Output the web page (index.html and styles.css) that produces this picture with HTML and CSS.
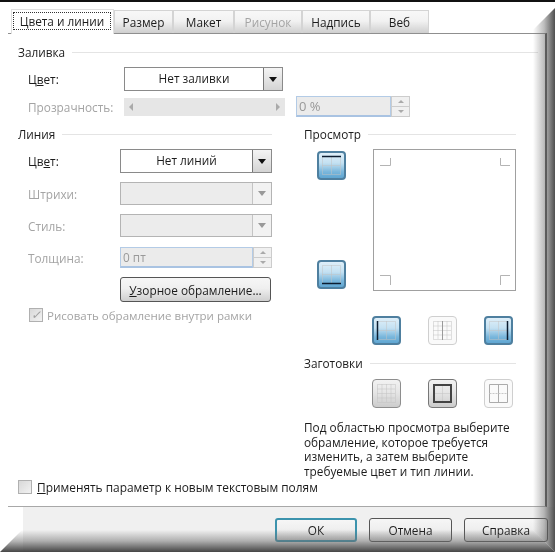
FILE: index.html
```html
<!DOCTYPE html>
<html lang="ru">
<head>
  <meta charset="UTF-8" />
  <title>Формат надписи</title>
  <link rel="stylesheet" href="styles.css">
</head>
<body>
  <svg class="defs" width="0" height="0">
    <symbol id="grid" viewBox="0 0 21 21">
      <path class="dots" d="M1.5 1.5H19.5V19.5H1.5ZM10.5 1.5V19.5M1.5 10.5H19.5"/>
    </symbol>
    <symbol id="grid-dense" viewBox="0 0 21 21">
      <path class="dots" d="M1.5 1.5H19.5V19.5H1.5ZM10.5 1.5V19.5M1.5 10.5H19.5M6 1.5V19.5M15 1.5V19.5M1.5 6H19.5M1.5 15H19.5"/>
    </symbol>
  </svg>

  <div class="dialog">
    <div class="tabs">
      <div class="tab active"><span class="focus">Цвета и линии</span></div>
      <div class="tab w-size">Размер</div>
      <div class="tab w-layout">Макет</div>
      <div class="tab w-pic off">Рисунок</div>
      <div class="tab w-cap">Надпись</div>
      <div class="tab w-web">Веб</div>
    </div>

    <div class="panel">
      <div class="title">Заливка</div>
      <div class="row fill-color">
        <label class="lbl lbl-fill">Ц<u>в</u>ет:</label>
        <div class="combo combo-fill"><span>Нет заливки</span><i class="drop"></i></div>
      </div>
      <div class="row fill-alpha">
        <label class="lbl lbl-fill off">Прозрачность:</label>
        <div class="scroll"><i class="sc-left"></i><i class="sc-right"></i></div>
        <div class="num num-alpha">0 %</div>
        <div class="spin"><i class="up"></i><i class="down"></i></div>
      </div>

      <div class="cols">
        <div class="col-left">
          <div class="title">Линия</div>
          <div class="row line-color">
            <label class="lbl">Цв<u>е</u>т:</label>
            <div class="combo"><span>Нет линий</span><i class="drop"></i></div>
          </div>
          <div class="row line-next">
            <label class="lbl off">Штрихи:</label>
            <div class="combo disabled"><span></span><i class="drop"></i></div>
          </div>
          <div class="row line-next">
            <label class="lbl off">Стиль:</label>
            <div class="combo disabled"><span></span><i class="drop"></i></div>
          </div>
          <div class="row line-width">
            <label class="lbl off">Толщина:</label>
            <div class="num num-width">0 пт</div>
            <div class="spin"><i class="up"></i><i class="down"></i></div>
          </div>
          <button class="btn btn-pattern"><u>У</u>зорное обрамление...</button>
          <div class="check check-inner off"><i class="box checked"></i>Рисовать обрамление внутри рамки</div>
        </div>

        <div class="col-right">
          <div class="title">Просмотр</div>
          <div class="preview">
            <div class="side">
              <div class="bd on"><svg viewBox="0 0 21 21"><use href="#grid"/><path class="edge" d="M1 1.5H20"/></svg></div>
              <div class="bd on"><svg viewBox="0 0 21 21"><use href="#grid"/><path class="edge" d="M1 19.5H20"/></svg></div>
            </div>
            <div class="sheet">
              <svg viewBox="0 0 141 140"><path class="marks" d="M6 15.5H16.5V8M126.5 8V15.5H136M6 125.5H16.5V135M136 125.5H126.5V135"/></svg>
            </div>
          </div>
          <div class="bd-row">
            <div class="bd on"><svg viewBox="0 0 21 21"><use href="#grid"/><path class="edge" d="M1.5 1V20"/></svg></div>
            <div class="bd"><svg viewBox="0 0 21 21"><use href="#grid-dense"/><path class="mid" d="M10.5 1V20"/></svg></div>
            <div class="bd on"><svg viewBox="0 0 21 21"><use href="#grid"/><path class="edge" d="M19.5 1V20"/></svg></div>
          </div>

          <div class="title presets-title">Заготовки</div>
          <div class="bd-row presets">
            <div class="bd grey"><svg viewBox="0 0 21 21"><use href="#grid-dense"/></svg></div>
            <div class="bd grey dark"><svg viewBox="0 0 21 21"><use href="#grid"/><path class="frame" d="M2 2H19V19H2Z"/></svg></div>
            <div class="bd"><svg viewBox="0 0 21 21"><path class="plain" d="M1.5 1.5H19.5V19.5H1.5ZM10.5 1.5V19.5"/><path class="plain-h" d="M1.5 10.5H19.5"/></svg></div>
          </div>
          <p class="hint">Под областью просмотра выберите обрамление, которое требуется изменить, а затем выберите требуемые цвет и тип линии.</p>
        </div>
      </div>

      <div class="check check-new"><i class="box"></i><span><u>П</u>рименять параметр к новым текстовым полям</span></div>
    </div>

    <div class="footer">
      <button class="btn btn-ok">ОК</button>
      <button class="btn btn-cancel">Отмена</button>
      <button class="btn btn-help">Справка</button>
    </div>

    <div class="shade-right"></div>
    <div class="shade-bottom"></div>
  </div>
</body>
</html>
```

FILE: styles.css
```css
html, body {
  margin: 0;
  padding: 0;
  background: #fff;
}
.defs {
  position: absolute;
}
.dialog {
  position: relative;
  width: 555px;
  height: 552px;
  overflow: hidden;
  background: #fff;
  border-top: 2px solid #111;
  box-sizing: border-box;
  font-family: "Open Sans", "Noto Sans", sans-serif;
  font-size: 11.8px;
  color: #1c1c1c;
  filter: blur(0.45px);
}
u {
  text-underline-offset: 1px;
}
.off {
  color: #a4a4a4;
}

/* tabs */
.tabs {
  display: flex;
  height: 23px;
  margin: 8px 0 0 11px;
}
.tab {
  width: 60px;
  box-sizing: border-box;
  border: 1px solid #d4d4d4;
  border-bottom: none;
  background: linear-gradient(#f8f8f8, #f2f2f2 45%, #cfcfcf);
  text-align: center;
  line-height: 22px;
}
.tab.active {
  width: 103px;
  height: 25px;
  margin-top: -1px;
  padding: 2px 2px 0 1px;
  background: #fff;
  position: relative;
  z-index: 1;
  border-color: #e0e0e0;
}
.focus {
  display: block;
  height: 18px;
  line-height: 16px;
  border: 1px dotted #333;
  box-sizing: border-box;
}
.w-size { width: 59px; }
.w-layout { width: 61px; }
.w-pic { width: 68px; }
.w-cap { width: 68px; }
.w-web { width: 59px; }

/* panel */
.panel {
  box-sizing: border-box;
  width: 539px;
  height: 474px;
  margin-left: 8px;
  padding: 10px 7px 0 10px;
  background: #fff;
  border-top: 1px solid #8f8f8f;
  border-right: 2px solid #555;
  border-bottom: 1px solid #a8a8a8;
}
.title {
  display: flex;
  align-items: center;
  gap: 7px;
  height: 16px;
}
.title::after {
  content: "";
  flex: 1;
  height: 1px;
  background: #e4e4e4;
}
.row {
  display: flex;
  align-items: center;
}
.lbl {
  width: 92px;
  margin-left: 10px;
}
.lbl-fill {
  width: 96px;
}
.fill-color {
  margin-top: 7px;
  height: 24px;
}
.fill-alpha {
  margin-top: 5px;
  height: 21px;
}
.line-color {
  margin-top: 7px;
}
.line-next {
  margin-top: 9px;
}
.line-width {
  margin-top: 10px;
}

/* combos */
.combo {
  display: flex;
  box-sizing: border-box;
  width: 152px;
  height: 24px;
  border: 1px solid #8a8a8a;
  background: #fff;
}
.combo span {
  flex: 1;
  text-align: center;
  line-height: 21px;
}
.combo-fill {
  width: 159px;
}
.drop {
  display: flex;
  align-items: center;
  justify-content: center;
  width: 18px;
  background: linear-gradient(#f4f4f4, #d4d4d4);
  border-left: 1px solid #777;
}
.drop::after {
  content: "";
  border: 4px solid transparent;
  border-top: 5px solid #111;
  border-bottom: none;
}
.combo.disabled {
  height: 23px;
  background: #ececec;
  border-color: #b4b4b4;
}
.combo.disabled .drop {
  background: #f2f2f2;
  border-left-color: #c4c4c4;
}
.combo.disabled .drop::after {
  border-top-color: #999;
}

/* scrollbar, number fields */
.scroll {
  display: flex;
  justify-content: space-between;
  align-items: center;
  box-sizing: border-box;
  width: 161px;
  height: 18px;
  padding: 0 5px;
  background: #e6e6e6;
}
.sc-left, .sc-right {
  border: 4px solid transparent;
}
.sc-left {
  border-right: 4px solid #aaa;
  border-left: none;
}
.sc-right {
  border-left: 4px solid #aaa;
  border-right: none;
}
.num {
  box-sizing: border-box;
  height: 21px;
  padding-left: 2px;
  line-height: 19px;
  color: #999;
  background: #ebebeb;
  border: 1px solid #b3cbe6;
  border-bottom: 2px solid #a9c3e2;
}
.num-alpha {
  width: 95px;
  margin-left: 11px;
  font-size: 13px;
}
.num-width {
  width: 133px;
}
.spin {
  display: flex;
  flex-direction: column;
  box-sizing: border-box;
  width: 19px;
  height: 21px;
  background: #f0f0f0;
  border: 1px solid #ccc;
}
.spin i {
  flex: 1;
  display: flex;
  align-items: center;
  justify-content: center;
}
.spin .up {
  border-bottom: 1px solid #ccc;
}
.spin .up::after {
  content: "";
  border: 3px solid transparent;
  border-bottom: 3px solid #aaa;
  border-top: none;
}
.spin .down::after {
  content: "";
  border: 3px solid transparent;
  border-top: 3px solid #aaa;
  border-bottom: none;
}

/* buttons */
.btn {
  display: block;
  box-sizing: border-box;
  font: inherit;
  color: #1c1c1c;
  padding: 0;
  border: 1px solid #555;
  border-radius: 3px;
  background: linear-gradient(#f6f6f6, #efefef 45%, #cfcfcf);
}
.btn-pattern {
  width: 151px;
  height: 25px;
  margin: 9px 0 0 102px;
}
.btn-ok {
  width: 82px;
  border: 2px solid #3c93ad;
}
.btn-cancel {
  width: 83px;
}
.btn-help {
  width: 84px;
}
.footer {
  display: flex;
  gap: 12px;
  height: 45px;
  margin-left: 23px;
  padding: 11px 0 10px 252px;
  box-sizing: border-box;
  background: #f0f0f0;
}

/* checkboxes */
.check {
  display: flex;
  align-items: center;
  gap: 4px;
}
.check-inner {
  margin: 6px 0 0 11px;
  height: 14px;
  font-size: 11.5px;
}
.check-new {
  margin-top: 2px;
  height: 14px;
  gap: 5px;
  font-size: 11.9px;
}
.box {
  display: flex;
  align-items: center;
  justify-content: center;
  box-sizing: border-box;
  width: 14px;
  height: 14px;
  border: 1px solid #b0b0b0;
  background: linear-gradient(135deg, #d8d8d8, #f2f2f2);
}
.box.checked::after {
  content: "✓";
  font-size: 12px;
  line-height: 12px;
  color: #a0a0a0;
}

/* two columns under the fill section */
.cols {
  display: flex;
  gap: 32px;
  margin-top: 9px;
}
.col-left {
  width: 254px;
}
.col-right {
  width: 212px;
}
.preview {
  display: flex;
  gap: 27px;
  margin-top: 7px;
  padding-left: 13px;
}
.side {
  display: flex;
  flex-direction: column;
  justify-content: space-between;
  padding: 2px 0;
}
.sheet {
  box-sizing: border-box;
  width: 143px;
  height: 142px;
  border: 1px solid #a0a0a0;
  background: #fff;
}
.sheet svg {
  display: block;
  width: 141px;
  height: 140px;
}
.marks {
  fill: none;
  stroke: #b4b4b4;
}
.bd-row {
  display: flex;
  justify-content: space-between;
  width: 141px;
  margin: 25px 0 0 68px;
}
.bd {
  box-sizing: border-box;
  width: 29px;
  height: 29px;
  padding: 3px;
  border: 1px solid #cfcfcf;
  border-radius: 4px;
  background: #fafafa;
}
.bd svg {
  display: block;
  width: 21px;
  height: 21px;
}
.dots {
  fill: none;
  stroke: #c2c2c2;
  stroke-width: 1;
  stroke-dasharray: 1 1;
}
.mid {
  fill: none;
  stroke: #9a9a9a;
}
.edge {
  fill: none;
  stroke: #0c1d30;
  stroke-width: 1.5;
}
.frame {
  fill: none;
  stroke: #444;
  stroke-width: 2;
}
.plain {
  fill: none;
  stroke: #ababab;
}
.plain-h {
  fill: none;
  stroke: #c8c8c8;
  stroke-dasharray: 2 1;
}
.bd.on {
  border: 2px solid #4e7f9f;
  padding: 2px;
  background: linear-gradient(#dfeff9, #c4e1f2 40%, #7ab7dc 75%, #5fa6d2);
}
.bd.on .dots {
  stroke: #a9c0d0;
}
.bd.grey {
  border-color: #8e8e8e;
  background: linear-gradient(#f2f2f2, #e6e6e6 45%, #cccccc);
}
.bd.grey.dark {
  border-color: #777;
}
.presets-title {
  margin-top: 10px;
}
.presets {
  margin-top: 8px;
}
.hint {
  margin: 12px 0 0;
  line-height: 14.5px;
}

/* dark frame fading in on the right and bottom */
.shade-right {
  position: absolute;
  top: -2px;
  right: 0;
  width: 22px;
  height: 552px;
  background: linear-gradient(to right, rgba(120,120,120,0), rgba(110,110,110,.45) 50%, rgba(70,70,70,.95));
  clip-path: polygon(100% 8px, 0 30px, 0 530px, 100% 552px);
}
.shade-bottom {
  position: absolute;
  bottom: 0;
  left: 0;
  width: 555px;
  height: 22px;
  background: linear-gradient(rgba(120,120,120,0), rgba(110,110,110,.5) 50%, rgba(60,60,60,.95));
  clip-path: polygon(22px 0, 533px 0, 555px 22px, 0 22px);
}
```
